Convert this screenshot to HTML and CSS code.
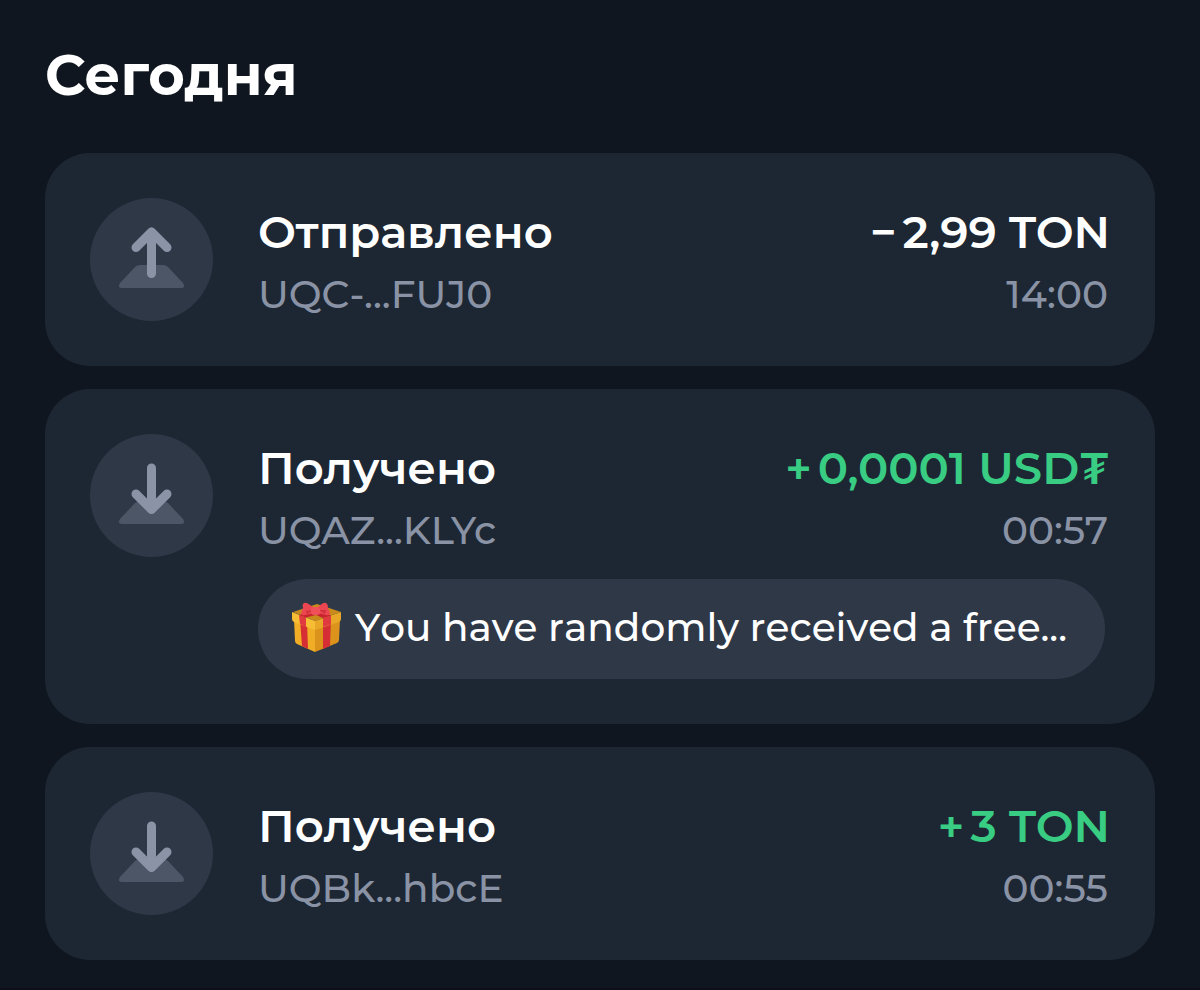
FILE: index.html
```html
<!DOCTYPE html>
<html lang="ru">
<head>
<meta charset="utf-8">
<meta name="viewport" content="width=device-width, initial-scale=1">
<title>Сегодня</title>
<link rel="stylesheet" href="styles.css">
</head>
<body>
<svg width="0" height="0" class="sprite" aria-hidden="true">
  <symbol id="sent" viewBox="0 0 123 123">
    <path class="base" d="M50 67 H73 Q76 67 78 69 L93 85 Q96 90 91 90 H32 Q27 90 30 85 L45 69 Q47 67 50 67 Z"/>
    <path class="arrow" d="M61.5 75.5 V34 M46 49.5 L61.5 34 L77 49.5"/>
  </symbol>
  <symbol id="received" viewBox="0 0 123 123">
    <path class="base" d="M50 67 H73 Q76 67 78 69 L93 85 Q96 90 91 90 H32 Q27 90 30 85 L45 69 Q47 67 50 67 Z"/>
    <path class="arrow" d="M61.5 34 V75.5 M46 60 L61.5 75.5 L77 60"/>
  </symbol>
</svg>
<main class="history">
  <h1 class="title">Сегодня</h1>
  <ul class="list">
    <li class="card">
      <svg class="icon" aria-hidden="true"><use href="#sent"/></svg>
      <div class="body">
        <div class="row main"><span>Отправлено</span><span class="amount"><span class="sign">−</span>2,99 TON</span></div>
        <div class="row meta"><span>UQC-...FUJ0</span><time>14:00</time></div>
      </div>
    </li>
    <li class="card">
      <svg class="icon" aria-hidden="true"><use href="#received"/></svg>
      <div class="body">
        <div class="row main"><span>Получено</span><span class="amount income"><span class="sign">+</span>0,0001 USD₮</span></div>
        <div class="row meta"><span>UQAZ...KLYc</span><time>00:57</time></div>
        <p class="comment">
          <svg class="gift" viewBox="0 0 50 50" aria-hidden="true">
            <path fill="#c98a1b" d="M1 10 25 2 49 10 23 19Z"/>
            <path fill="#f0ad25" d="M2 17 23 24V50L5 42Q3 41 3 39Z"/>
            <path fill="#dc931c" d="M23 24 48 17 47 38Q47 40 45 41L23 50Z"/>
            <path fill="#d52e34" d="M8 17 15 20 16 47 10 44ZM31 20 39 17 38 44 31 47Z"/>
            <path fill="#f7bd35" d="M0 10 23 19V28L2 20Q0 19 0 17Z"/>
            <path fill="#e9a727" d="M23 19 49 10V17Q49 19 47 20L23 28Z"/>
            <path fill="#e13940" d="M7 13 14 15.5V25L8 22ZM31 16 39 13.5V22.5L31 25Z"/>
            <path fill="#c7242d" d="M7 13 21 8 28 8 39 13.5 31 16 24 13 14 15.5Z"/>
            <path fill="#ec4650" d="M22 6Q15 0 12 1Q10 2 11 6L9 11Q9 14 13 13L22 11ZM25 6Q31 0 34 1Q36 2 36 6L38 11Q38 14 34 13L26 11Z"/>
            <path fill="#d0323c" d="M14 9 21 8 15 12ZM27 8 34 8 33 12Z"/>
            <rect x="19" y="5" width="9" height="8" rx="3" fill="#f0505a"/>
          </svg>
          <span class="text">You have randomly received a free...</span>
        </p>
      </div>
    </li>
    <li class="card">
      <svg class="icon" aria-hidden="true"><use href="#received"/></svg>
      <div class="body">
        <div class="row main"><span>Получено</span><span class="amount income"><span class="sign">+</span>3 TON</span></div>
        <div class="row meta"><span>UQBk...hbcE</span><time>00:55</time></div>
      </div>
    </li>
  </ul>
</main>
</body>
</html>
```

FILE: styles.css
```css
* { box-sizing: border-box; }
body { margin: 0; background: #0f161f; color: #fff; font-family: Montserrat, "Open Sans", Inter, sans-serif; }
.sprite { position: absolute; }
.history { padding: 43px 45px 28px; border-bottom: 2px solid #100f19; }
.title { margin: 0 0 46px; font-size: 56px; line-height: 64px; font-weight: 700; }
.list { display: grid; gap: 23px; margin: 0; padding: 0; list-style: none; }
.card { display: flex; align-items: flex-start; gap: 45px; padding: 45px; background: #1d2733; border-radius: 45px; }
.icon { flex: none; width: 123px; height: 123px; border-radius: 50%; background: #2f3847; }
.base { fill: #4c5666; }
.arrow { fill: none; stroke: #8a94a6; stroke-width: 9px; stroke-linecap: round; stroke-linejoin: round; }
.body { flex: 1; min-width: 0; padding-top: 6px; }
.row { display: flex; justify-content: space-between; }
.main { font-size: 45px; line-height: 56px; font-weight: 600; }
.meta { padding: 10px 2px 1px 0; font-size: 39px; line-height: 48px; font-weight: 500; color: #8a93a5; }
.income { color: #39cc83; }
.sign { margin-right: 6px; }
.comment { display: flex; align-items: center; gap: 13px; margin: 24px 5px 0 0; padding: 0 34px 5px; height: 100px; border-radius: 50px; background: #2f3847; font-size: 39px; line-height: 48px; font-weight: 500; font-kerning: none; white-space: nowrap; }
.gift { flex: none; width: 50px; height: 50px; }
```
